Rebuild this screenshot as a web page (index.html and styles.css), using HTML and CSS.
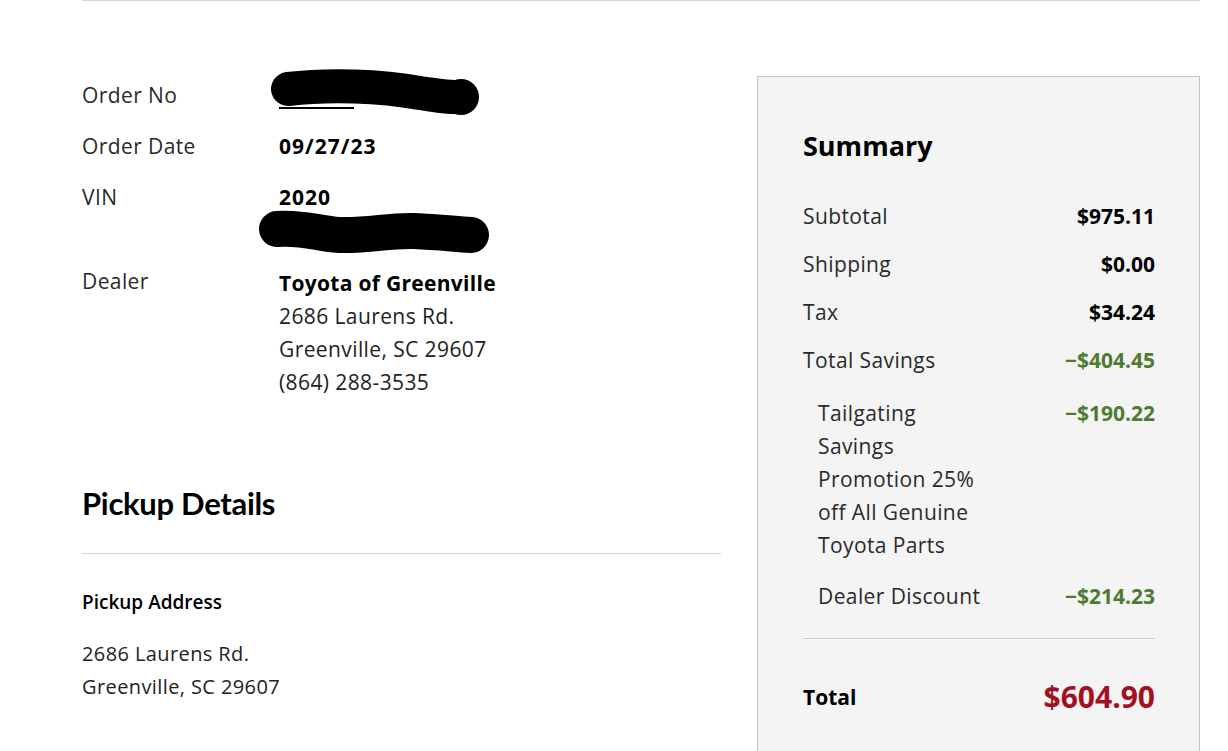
FILE: index.html
```html
<!DOCTYPE html>
<html lang="en">
<head>
<meta charset="utf-8">
<title>Order Details</title>
<link rel="stylesheet" href="styles.css">
</head>
<body>
<div class="page">
  <div class="main">
    <section class="details">
      <div class="info-grid">
        <div class="label">Order No</div>
        <div class="value redacted">
          <span class="order-link"></span>
          <svg class="scribble scribble-order" width="220" height="50" viewBox="0 0 220 50">
            <path d="M18 20 C60 15 110 17 150 24 C165 26 175 28 185 28" stroke="#000" stroke-width="34" stroke-linecap="round" fill="none"/>
            <circle cx="191" cy="28" r="18" fill="#000"/>
          </svg>
        </div>

        <div class="label">Order Date</div>
        <div class="value bold digits">09/27/23</div>

        <div class="label">VIN</div>
        <div class="value">
          <div class="bold digits">2020</div>
          <div class="redacted vin-redact">
            <svg class="scribble scribble-vin" width="235" height="46" viewBox="0 0 235 46">
              <path d="M18 19 C45 17 60 24 80 25 C110 26 130 20 155 21 C180 22 195 24 212 25" stroke="#000" stroke-width="36" stroke-linecap="round" fill="none"/>
            </svg>
          </div>
        </div>

        <div class="label">Dealer</div>
        <div class="value">
          <div class="bold dealer-name">Toyota of Greenville</div>
          <div>2686 Laurens Rd.</div>
          <div>Greenville, SC 29607</div>
          <div>(864) 288-3535</div>
        </div>
      </div>

      <h2 class="section-title">Pickup Details</h2>
      <div class="pickup">
        <h3 class="pickup-title">Pickup Address</h3>
        <div class="pickup-lines">
          <div>2686 Laurens Rd.</div>
          <div>Greenville, SC 29607</div>
        </div>
      </div>
    </section>

    <aside class="summary">
      <h2 class="summary-title">Summary</h2>
      <div class="rows">
        <div class="row"><span class="row-label">Subtotal</span><span class="row-value">$975.11</span></div>
        <div class="row"><span class="row-label">Shipping</span><span class="row-value">$0.00</span></div>
        <div class="row"><span class="row-label">Tax</span><span class="row-value">$34.24</span></div>
        <div class="row"><span class="row-label">Total Savings</span><span class="row-value savings">&minus;$404.45</span></div>
      </div>
      <div class="subrows">
        <div class="row sub"><span class="row-label">Tailgating Savings Promotion 25% off All Genuine Toyota Parts</span><span class="row-value savings">&minus;$190.22</span></div>
        <div class="row sub"><span class="row-label">Dealer Discount</span><span class="row-value savings">&minus;$214.23</span></div>
      </div>
      <div class="total-row">
        <span class="total-label">Total</span>
        <span class="total-value">$604.90</span>
      </div>
    </aside>
  </div>
</div>
</body>
</html>
```

FILE: styles.css
```css
* { box-sizing: border-box; }

html, body {
  margin: 0;
  padding: 0;
  background: #fff;
}

body {
  font-family: "Open Sans", "Noto Sans", sans-serif;
  color: #1a1a1a;
  overflow: hidden;
}

.page {
  margin-left: 82px;
  width: 1118px;
  border-top: 1px solid #d6d6d6;
}

.main {
  display: flex;
  gap: 36px;
  align-items: flex-start;
}

.details {
  width: 639px;
  padding-top: 78px;
}

.info-grid {
  display: grid;
  grid-template-columns: 197px 1fr;
  row-gap: 18px;
  font-size: 21px;
  line-height: 33px;
  letter-spacing: 0.4px;
}

.label {
  color: #2a2a2a;
}

.value {
  color: #222;
}

.bold {
  font-weight: 700;
  color: #000;
  letter-spacing: 0.3px;
}

.bold.digits {
  letter-spacing: 1px;
}

.dealer-name {
  padding-top: 2px;
}

.redacted {
  position: relative;
  height: 33px;
}

.order-link {
  position: absolute;
  left: 0;
  top: 28px;
  width: 75px;
  height: 2px;
  background: #000;
}

.scribble {
  position: absolute;
  display: block;
}

.scribble-order {
  left: -9px;
  top: -10px;
}

.vin-redact {
  height: 33px;
}

.scribble-vin {
  left: -20px;
  top: -4px;
}

.section-title {
  margin: 85px 0 0;
  font-family: "Lato", "Open Sans", sans-serif;
  font-size: 31px;
  line-height: 38px;
  font-weight: 700;
  color: #000;
  letter-spacing: -0.3px;
  padding-bottom: 31px;
  border-bottom: 1px solid #d6d6d6;
}

.pickup {
  padding-top: 36px;
}

.pickup-title {
  margin: 0;
  font-size: 19px;
  line-height: 24px;
  font-weight: 600;
  color: #000;
}

.pickup-lines {
  margin-top: 23px;
  font-size: 20px;
  line-height: 33px;
  letter-spacing: 0.4px;
  color: #222;
}

.summary {
  width: 443px;
  margin-top: 75px;
  min-height: 700px;
  background: #f4f4f4;
  border: 1px solid #c4c4c4;
  padding: 51px 44px 40px 45px;
}

.summary-title {
  margin: 0 0 36px;
  font-size: 27px;
  line-height: 36px;
  font-weight: 700;
  color: #000;
}

.rows {
  display: flex;
  flex-direction: column;
  gap: 15px;
}

.row {
  display: flex;
  justify-content: space-between;
  align-items: flex-start;
  font-size: 21px;
  line-height: 33px;
  letter-spacing: 0.4px;
}

.row-label {
  color: #2a2a2a;
}

.row-value {
  font-weight: 700;
  color: #000;
  font-size: 21px;
  letter-spacing: 0;
}

.row-value.savings {
  color: #4e7a32;
}

.subrows {
  margin-top: 20px;
  padding-left: 15px;
  display: flex;
  flex-direction: column;
  gap: 18px;
  padding-bottom: 25px;
  border-bottom: 1px solid #d0d0d0;
}

.sub .row-label {
  flex: 0 0 50%;
}

.total-row {
  display: flex;
  justify-content: space-between;
  align-items: center;
  padding-top: 38px;
}

.total-label {
  font-size: 21px;
  font-weight: 700;
  color: #000;
}

.total-value {
  font-size: 30px;
  line-height: 40px;
  font-weight: 700;
  color: #a3101f;
}
```
